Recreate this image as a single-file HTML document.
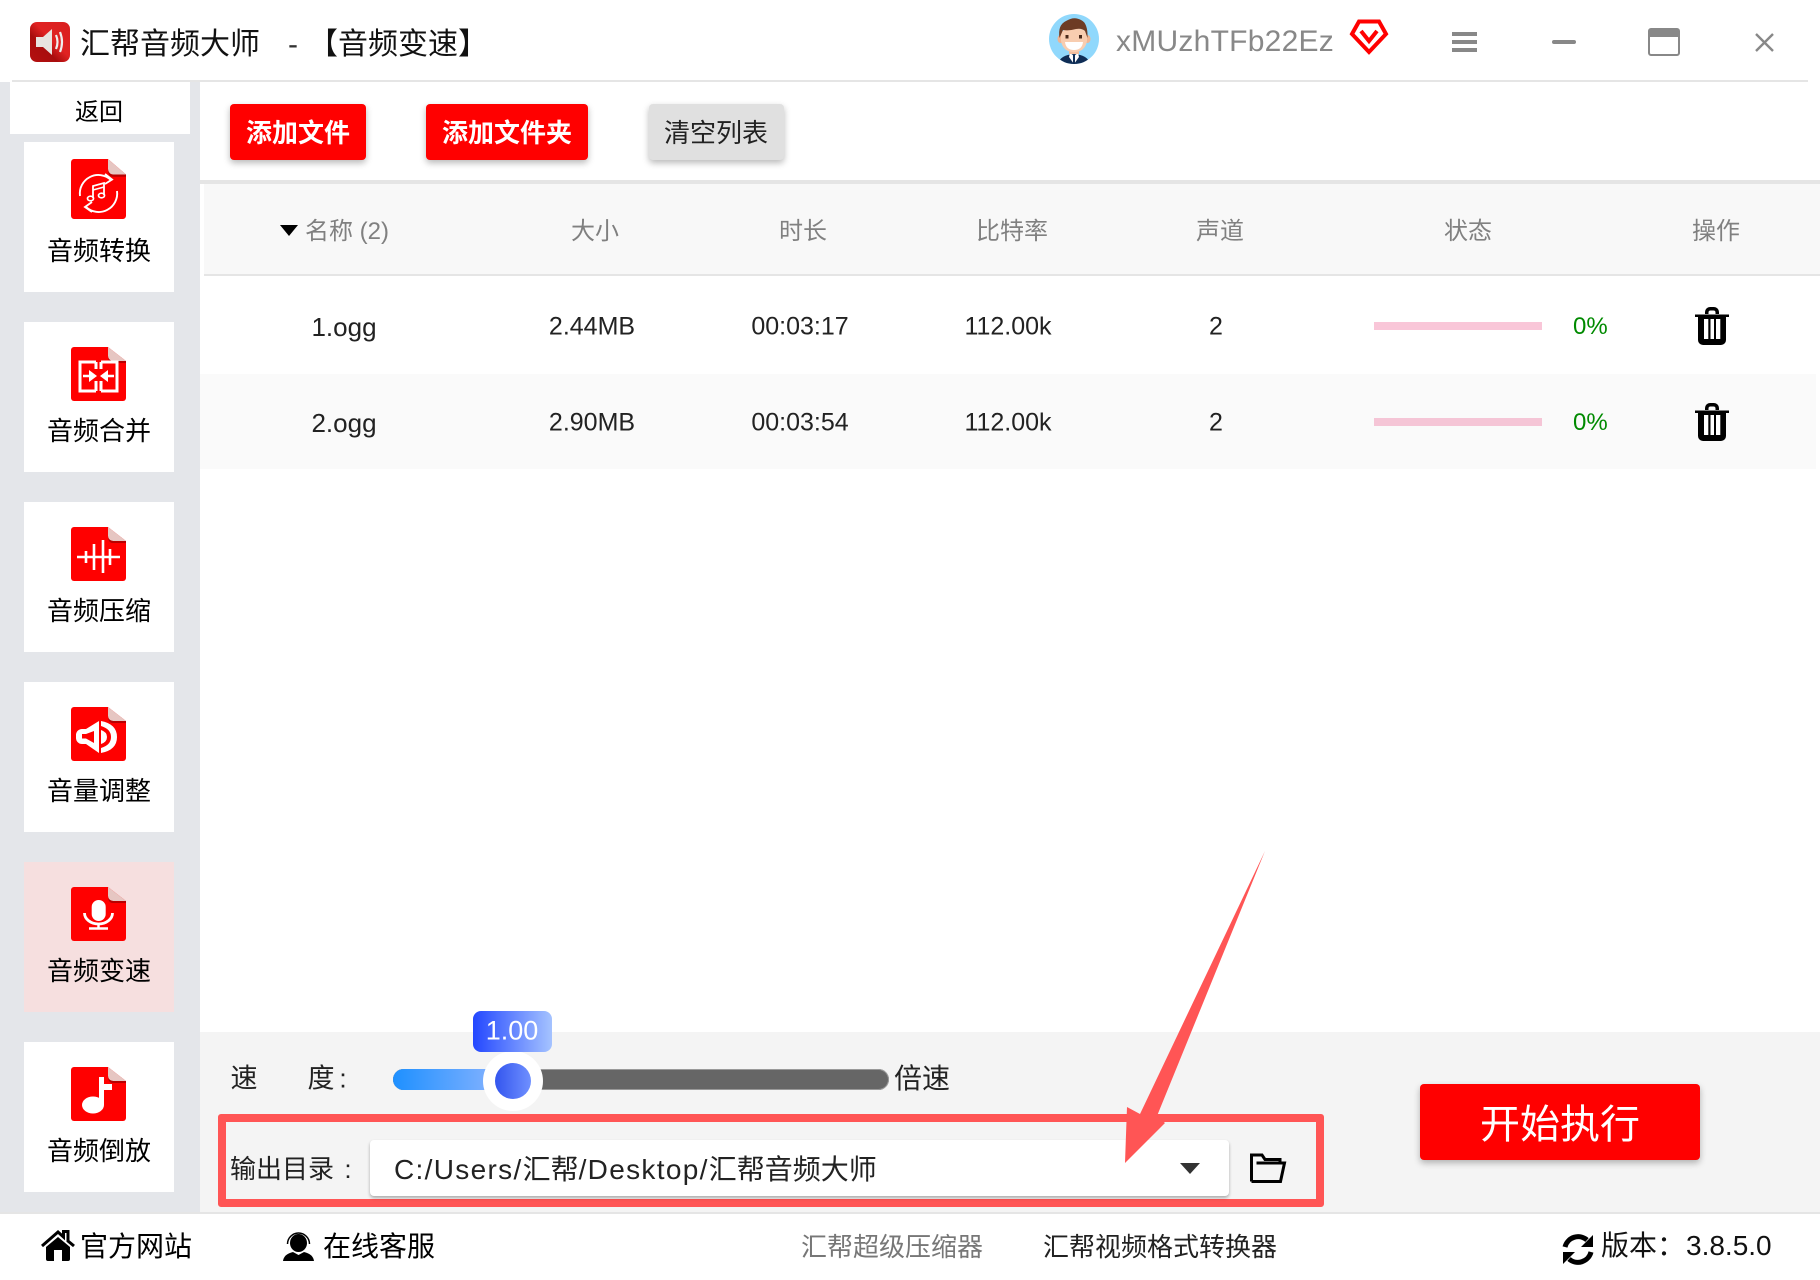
<!DOCTYPE html>
<html lang="zh-CN">
<head>
<meta charset="utf-8">
<title>汇帮音频大师</title>
<style>
html,body{margin:0;padding:0;background:#fff}
body{width:1820px;height:1280px;position:relative;overflow:hidden;font-family:"Liberation Sans","Noto Sans CJK SC",sans-serif;color:#000}
.b{position:absolute}
.t{position:absolute;white-space:nowrap;line-height:1;transform:translate(-50%,-50%)}
.l{position:absolute;white-space:nowrap;line-height:1;transform:translateY(-50%)}
.card{position:absolute;left:24px;width:150px;height:150px;background:#fff}
.btn{position:absolute;top:104px;height:56px;border-radius:4px;box-shadow:0 3px 7px rgba(0,0,0,.28);background:#f00}
.h{font-size:24px;color:#808080}
.c{font-size:25px;color:#222}
.p{position:absolute;left:1374px;width:168px;height:8px;background:#f9c6d8}
svg{position:absolute;display:block;overflow:visible}
</style>
</head>
<body>
<svg width="0" height="0" style="position:absolute">
<defs>
<symbol id="doc" viewBox="0 0 55 54" preserveAspectRatio="none">
<path d="M3 0H37L55 14V51a3 3 0 0 1-3 3H3a3 3 0 0 1-3-3V3a3 3 0 0 1 3-3z" fill="#f00"/>
<path d="M37 0L55 14H42a5 5 0 0 1-5-5z" fill="#e6c6c2"/>
<path d="M37 9a5 5 0 0 0 5 5H55V16H42q-5 0-5-7z" fill="#b80000"/>
</symbol>
<symbol id="trash" viewBox="0 0 34 38">
<path d="M0 7.500H34V10H31V33a5 5 0 0 1-5 5H8a5 5 0 0 1-5-5V10H0z M10 7V5a5 5 0 0 1 5-5h4a5 5 0 0 1 5 5V7H20.500V5.500a2 2 0 0 0-2-2h-3a2 2 0 0 0-2 2V7z" fill="#000"/>
<rect x="9" y="12" width="4.300" height="20" fill="#fff"/>
<rect x="15.500" y="12" width="3.500" height="20" fill="#fff"/>
<rect x="21" y="12" width="4.300" height="20" fill="#fff"/>
</symbol>
<linearGradient id="lg" x1="0" y1="1" x2="1" y2="0"><stop offset="0" stop-color="#b51010"/><stop offset=".35" stop-color="#a80d0d"/><stop offset=".55" stop-color="#e02222"/><stop offset="1" stop-color="#d92020"/></linearGradient>
</defs>
</svg>

<!-- title bar -->
<svg style="left:30px;top:22px" width="40" height="40" viewBox="0 0 40 40">
<rect width="40" height="40" rx="7" fill="url(#lg)"/>
<path d="M6 15H13L22 7V33L13 25H6z" fill="#e8e4e0"/>
<path d="M26 13q3 7 0 14" fill="none" stroke="#eee" stroke-width="2.200"/>
<path d="M30 10q4 10 0 20" fill="none" stroke="#eee" stroke-width="2.200"/>
</svg>
<div class="l" style="left:80px;top:45px;font-size:30px;color:#111">汇帮音频大师</div>
<div class="l" style="left:288px;top:45px;font-size:30px;color:#333">-</div>
<div class="l" style="left:308px;top:45px;font-size:30px;color:#111">【音频变速】</div>

<svg style="left:1049px;top:14px" width="50" height="50" viewBox="0 0 50 50">
<defs><clipPath id="av"><circle cx="25" cy="25" r="25"/></clipPath></defs>
<circle cx="25" cy="25" r="25" fill="#90d8fc"/>
<g clip-path="url(#av)">
<path d="M9 50q2-9 16-10q14 1 16 10z" fill="#0f2d55"/>
<path d="M21 39l4 3 4-3 1 4-5 7-5-7z" fill="#fff"/>
<rect x="24" y="41" width="2" height="9" fill="#0f2d55"/>
<rect x="20" y="32" width="10" height="8" fill="#f3bd9c"/>
<ellipse cx="11.500" cy="25" rx="3" ry="4" fill="#f0b593"/>
<ellipse cx="38.500" cy="25" rx="3" ry="4" fill="#f0b593"/>
<path d="M12 20q0-5 13-6q13 1 13 6v7q-2 11-13 11q-11 0-13-11z" fill="#f8cdb0"/>
<path d="M10.500 24q-2-13 6.500-17q8-5 15-1q7 3 6.500 18l-2.500-7q-3-3-9-2q-7 2-13 1z" fill="#6d3b24"/>
<rect x="16.500" y="21" width="3" height="3.500" fill="#4a2a1b"/>
<rect x="30" y="21" width="3" height="3.500" fill="#4a2a1b"/>
<path d="M16 28h18q-1 8-9 8t-9-8z" fill="#fff"/>
</g>
</svg>
<div class="l" style="left:1116px;top:42px;font-size:30px;color:#888;letter-spacing:.25px">xMUzhTFb22Ez</div>
<svg style="left:1350px;top:19px" width="38" height="36" viewBox="0 0 38 36">
<path d="M9 2.500H29L36 15 19 33 2 15z" fill="none" stroke="#f00" stroke-width="4" stroke-linejoin="miter"/>
<path d="M11 12L19 22 27 12" fill="none" stroke="#f00" stroke-width="4"/>
</svg>
<div class="b" style="left:1452px;top:32px;width:25px;height:4px;background:#888"></div>
<div class="b" style="left:1452px;top:40px;width:25px;height:4px;background:#888"></div>
<div class="b" style="left:1452px;top:48px;width:25px;height:4px;background:#888"></div>
<div class="b" style="left:1552px;top:40px;width:24px;height:4px;border-radius:2px;background:#888"></div>
<div class="b" style="left:1648px;top:28px;width:32px;height:28px;box-sizing:border-box;border:2.500px solid #888;border-top-width:9px;border-radius:3px"></div>
<svg style="left:1755px;top:33px" width="19" height="19" viewBox="0 0 19 19"><path d="M1 1L18 18M18 1L1 18" stroke="#888" stroke-width="2.400" fill="none"/></svg>
<div class="b" style="left:12px;top:80px;width:1796px;height:2px;background:#e5e5e5"></div>

<!-- sidebar -->
<div class="b" style="left:0;top:82px;width:200px;height:1130px;background:#e4e6ea"></div>
<div class="b" style="left:10px;top:82px;width:180px;height:52px;background:#fff"></div>
<div class="t" style="left:99px;top:113px;font-size:24px">返回</div>

<div class="card" style="top:142px"></div>
<div class="card" style="top:322px"></div>
<div class="card" style="top:502px"></div>
<div class="card" style="top:682px"></div>
<div class="card" style="top:862px;background:#f6dfdf"></div>
<div class="card" style="top:1042px"></div>

<svg style="left:71px;top:159px" width="55" height="60" viewBox="0 0 55 60">
<use href="#doc" width="55" height="60"/>
<path d="M9 37A18.500 18.500 0 0 1 40 21" fill="none" stroke="#fff" stroke-width="1.900"/>
<path d="M34 15L41 20.500 34 25" fill="none" stroke="#fff" stroke-width="1.900"/>
<path d="M46 32A18.500 18.500 0 0 1 15 48" fill="none" stroke="#fff" stroke-width="1.900"/>
<path d="M21 43L14 48 21 53" fill="none" stroke="#fff" stroke-width="1.900"/>
<path d="M22 39V27L33 24V36" fill="none" stroke="#fff" stroke-width="1.800"/>
<ellipse cx="19.500" cy="39.500" rx="3" ry="2.300" fill="none" stroke="#fff" stroke-width="1.700"/>
<ellipse cx="30.500" cy="36.500" rx="3" ry="2.300" fill="none" stroke="#fff" stroke-width="1.700"/>
<path d="M22 31L33 28" stroke="#fff" stroke-width="1.500"/>
</svg>
<svg style="left:71px;top:347px" width="55" height="54" viewBox="0 0 55 54">
<use href="#doc" width="55" height="54"/>
<path d="M25 15H9V44H25M25 34V44M25 15V22" fill="none" stroke="#fff" stroke-width="3"/>
<path d="M30 15H46V44H30M30 34V44M30 15V22" fill="none" stroke="#fff" stroke-width="3"/>
<path d="M12 29H19M43 29H36" stroke="#fff" stroke-width="2.500"/>
<path d="M18 23L26 29 18 35z M37 23L29 29 37 35z" fill="#fff"/>
</svg>
<svg style="left:71px;top:527px" width="55" height="54" viewBox="0 0 55 54">
<use href="#doc" width="55" height="54"/>
<path d="M6 30H49M15 24V36M23 17V43M32 13V46M39 22V38" stroke="#fff" stroke-width="2.600" fill="none"/>
</svg>
<svg style="left:71px;top:707px" width="55" height="54" viewBox="0 0 55 54">
<use href="#doc" width="55" height="54"/>
<path d="M28 14V46L15 37H11a6 6 0 0 1-6-6V28a6 6 0 0 1 6-6H15z" fill="#fff"/>
<path d="M23 24V36L15 31.500H11V27H15z" fill="#f00"/>
<path d="M30 14Q46 17 46 30T30 46V41Q40 38 40 30T30 19z" fill="#fff"/>
<path d="M30 23Q36 25 36 30T30 37z" fill="#fff"/>
</svg>
<svg style="left:71px;top:887px" width="55" height="54" viewBox="0 0 55 54">
<use href="#doc" width="55" height="54"/>
<path d="M20.700 20a7 7 0 0 1 14 0V27a7 7 0 0 1-14 0z" fill="#fff"/>
<path d="M13.500 26A14 11 0 0 0 41.500 26" fill="none" stroke="#fff" stroke-width="2.800"/>
<path d="M27.500 37V41M18 41.500H37" stroke="#fff" stroke-width="2.400" fill="none"/>
</svg>
<svg style="left:71px;top:1067px" width="55" height="54" viewBox="0 0 55 54">
<use href="#doc" width="55" height="54"/>
<ellipse cx="22" cy="38" rx="11" ry="8.500" fill="#fff"/>
<path d="M28 10H33V17H41V23H33V38H28z" fill="#fff"/>
</svg>

<div class="t" style="left:99px;top:251px;font-size:26px">音频转换</div>
<div class="t" style="left:99px;top:431px;font-size:26px">音频合并</div>
<div class="t" style="left:99px;top:611px;font-size:26px">音频压缩</div>
<div class="t" style="left:99px;top:791px;font-size:26px">音量调整</div>
<div class="t" style="left:99px;top:971px;font-size:26px">音频变速</div>
<div class="t" style="left:99px;top:1151px;font-size:26px">音频倒放</div>

<!-- toolbar -->
<div class="btn" style="left:230px;width:136px"></div>
<div class="t" style="left:298px;top:133px;font-size:26px;font-weight:700;color:#fff">添加文件</div>
<div class="btn" style="left:426px;width:162px"></div>
<div class="t" style="left:507px;top:133px;font-size:26px;font-weight:700;color:#fff">添加文件夹</div>
<div class="btn" style="left:649px;width:135px;background:#e0e0e0"></div>
<div class="t" style="left:716px;top:133px;font-size:26px;color:#222">清空列表</div>
<div class="b" style="left:200px;top:180px;width:1620px;height:4px;background:#e5e5e5"></div>

<!-- header -->
<div class="b" style="left:204px;top:184px;width:1616px;height:90px;background:#f8f8f8"></div>
<div class="b" style="left:204px;top:274px;width:1616px;height:2px;background:#e5e5e5"></div>
<svg style="left:280px;top:225px" width="18" height="11" viewBox="0 0 18 11"><path d="M0 0H18L9 11z" fill="#000"/></svg>
<div class="l h" style="left:305px;top:232px">名称 (2)</div>
<div class="t h" style="left:595px;top:232px">大小</div>
<div class="t h" style="left:803px;top:232px">时长</div>
<div class="t h" style="left:1012px;top:232px">比特率</div>
<div class="t h" style="left:1220px;top:232px">声道</div>
<div class="t h" style="left:1468px;top:232px">状态</div>
<div class="t h" style="left:1716px;top:232px">操作</div>

<!-- rows -->
<div class="b" style="left:200px;top:374px;width:1616px;height:95px;background:#fafafa"></div>
<div class="t c" style="left:344px;top:327px;font-size:26px">1.ogg</div>
<div class="t c" style="left:592px;top:327px">2.44MB</div>
<div class="t c" style="left:800px;top:327px">00:03:17</div>
<div class="t c" style="left:1008px;top:327px">112.00k</div>
<div class="t c" style="left:1216px;top:327px">2</div>
<div class="p" style="top:322px"></div>
<div class="l" style="left:1573px;top:327px;font-size:24px;color:#008a00">0%</div>
<svg style="left:1695px;top:307px" width="34" height="38"><use href="#trash" width="34" height="38"/></svg>

<div class="t c" style="left:344px;top:423px;font-size:26px">2.ogg</div>
<div class="t c" style="left:592px;top:423px">2.90MB</div>
<div class="t c" style="left:800px;top:423px">00:03:54</div>
<div class="t c" style="left:1008px;top:423px">112.00k</div>
<div class="t c" style="left:1216px;top:423px">2</div>
<div class="p" style="top:418px;background:#f5c5d6"></div>
<div class="l" style="left:1573px;top:423px;font-size:24px;color:#008a00">0%</div>
<svg style="left:1695px;top:403px" width="34" height="38"><use href="#trash" width="34" height="38"/></svg>

<!-- bottom panel -->
<div class="b" style="left:200px;top:1032px;width:1620px;height:180px;background:#f4f4f4"></div>
<div class="t" style="left:244px;top:1079px;font-size:27px;color:#222">速</div>
<div class="t" style="left:321px;top:1079px;font-size:27px;color:#222">度</div>
<div class="t" style="left:343px;top:1079px;font-size:27px;color:#222">:</div>
<div class="b" style="left:393px;top:1069px;width:496px;height:21px;border-radius:10.500px;background:#666;box-shadow:inset 0 0 0 1px #999"></div>
<div class="b" style="left:393px;top:1069px;width:110px;height:21px;border-radius:10.500px 0 0 10.500px;background:linear-gradient(90deg,#1e90ff,#8ab4ff)"></div>
<div class="b" style="left:483px;top:1051px;width:60px;height:60px;border-radius:50%;background:#fff"></div>
<div class="b" style="left:495px;top:1063px;width:36px;height:36px;border-radius:50%;background:linear-gradient(90deg,#3355ee,#6f90ff)"></div>
<div class="b" style="left:473px;top:1011px;width:79px;height:41px;border-radius:8px;background:linear-gradient(90deg,#2347ff,#a5c3ff)"></div>
<div class="t" style="left:512px;top:1031px;font-size:27px;color:#fff">1.00</div>
<div class="l" style="left:894px;top:1079px;font-size:28px;color:#222">倍速</div>

<div class="b" style="left:218px;top:1114px;width:1106px;height:93px;box-sizing:border-box;border:8px solid #ff5555;border-radius:3px"></div>
<div class="l" style="left:230px;top:1169px;font-size:26px;color:#222">输出目录</div>
<div class="t" style="left:348px;top:1169px;font-size:26px;color:#222">:</div>
<div class="b" style="left:370px;top:1140px;width:859px;height:56px;background:#fff;border-radius:4px;box-shadow:0 2px 3px rgba(0,0,0,.3)"></div>
<div class="l" style="left:394px;top:1170px;font-size:28px;color:#222"><span style="letter-spacing:1.320px">C:/Users/</span>汇帮<span style="letter-spacing:1.320px">/Desktop/</span>汇帮音频大师</div>
<svg style="left:1180px;top:1163px" width="20" height="11" viewBox="0 0 20 11"><path d="M0 0H20L10 11z" fill="#333"/></svg>
<svg style="left:1250px;top:1153px" width="36" height="30" viewBox="0 0 36 30">
<path d="M1.500 28.500V2H12L15 6.500H30V10" fill="none" stroke="#000" stroke-width="3"/>
<path d="M6.500 10H34.500L30.500 28.500H1.500" fill="none" stroke="#000" stroke-width="3"/>
</svg>

<div class="b" style="left:1420px;top:1084px;width:280px;height:76px;background:#f00;border-radius:4px;box-shadow:0 3px 7px rgba(0,0,0,.28)"></div>
<div class="t" style="left:1560px;top:1125px;font-size:40px;color:#fff">开始执行</div>

<!-- arrow -->
<svg style="left:0;top:0" width="1820" height="1280" viewBox="0 0 1820 1280">
<path d="M1265 851L1157 1116 1165 1123 1125 1163 1127 1107 1140 1114z" fill="#ff5555"/>
</svg>

<!-- footer -->
<div class="b" style="left:0;top:1212px;width:1820px;height:2px;background:#e5e5e5"></div>
<svg style="left:41px;top:1230px" width="34" height="31" viewBox="0 0 34 31">
<path d="M1 16L17 2 22.500 7V1.500H27V11L33 16" fill="none" stroke="#000" stroke-width="3"/>
<path d="M5 17L17 7 29 17V29a2 2 0 0 1-2 2H21V20H13V31H7a2 2 0 0 1-2-2z" fill="#000"/>
</svg>
<div class="l" style="left:80px;top:1247px;font-size:28px">官方网站</div>
<svg style="left:283px;top:1230px" width="31" height="31" viewBox="0 0 31 31">
<path d="M4.500 14A11 11 0 0 1 26.500 14" fill="none" stroke="#000" stroke-width="1.500"/>
<ellipse cx="15.500" cy="13" rx="8.500" ry="9" fill="#000"/>
<path d="M0 31Q1 24 10 22L15.500 25 21 22Q30 24 31 31z" fill="#000"/>
</svg>
<div class="l" style="left:323px;top:1247px;font-size:28px">在线客服</div>
<div class="l" style="left:801px;top:1247px;font-size:26px;color:#777">汇帮超级压缩器</div>
<div class="l" style="left:1043px;top:1247px;font-size:26px;color:#222">汇帮视频格式转换器</div>
<svg style="left:1562px;top:1234px" width="32" height="31" viewBox="0 0 32 31">
<path d="M3 13A13.500 13.500 0 0 1 25 6" fill="none" stroke="#000" stroke-width="5"/>
<path d="M31 1V13H19z" fill="#000"/>
<path d="M29 18A13.500 13.500 0 0 1 7 25" fill="none" stroke="#000" stroke-width="5"/>
<path d="M1 30V18H13z" fill="#000"/>
</svg>
<div class="l" style="left:1601px;top:1246px;font-size:28px;color:#111">版本：</div>
<div class="l" style="left:1686px;top:1246px;font-size:28px;color:#111">3.8.5.0</div>
</body>
</html>
